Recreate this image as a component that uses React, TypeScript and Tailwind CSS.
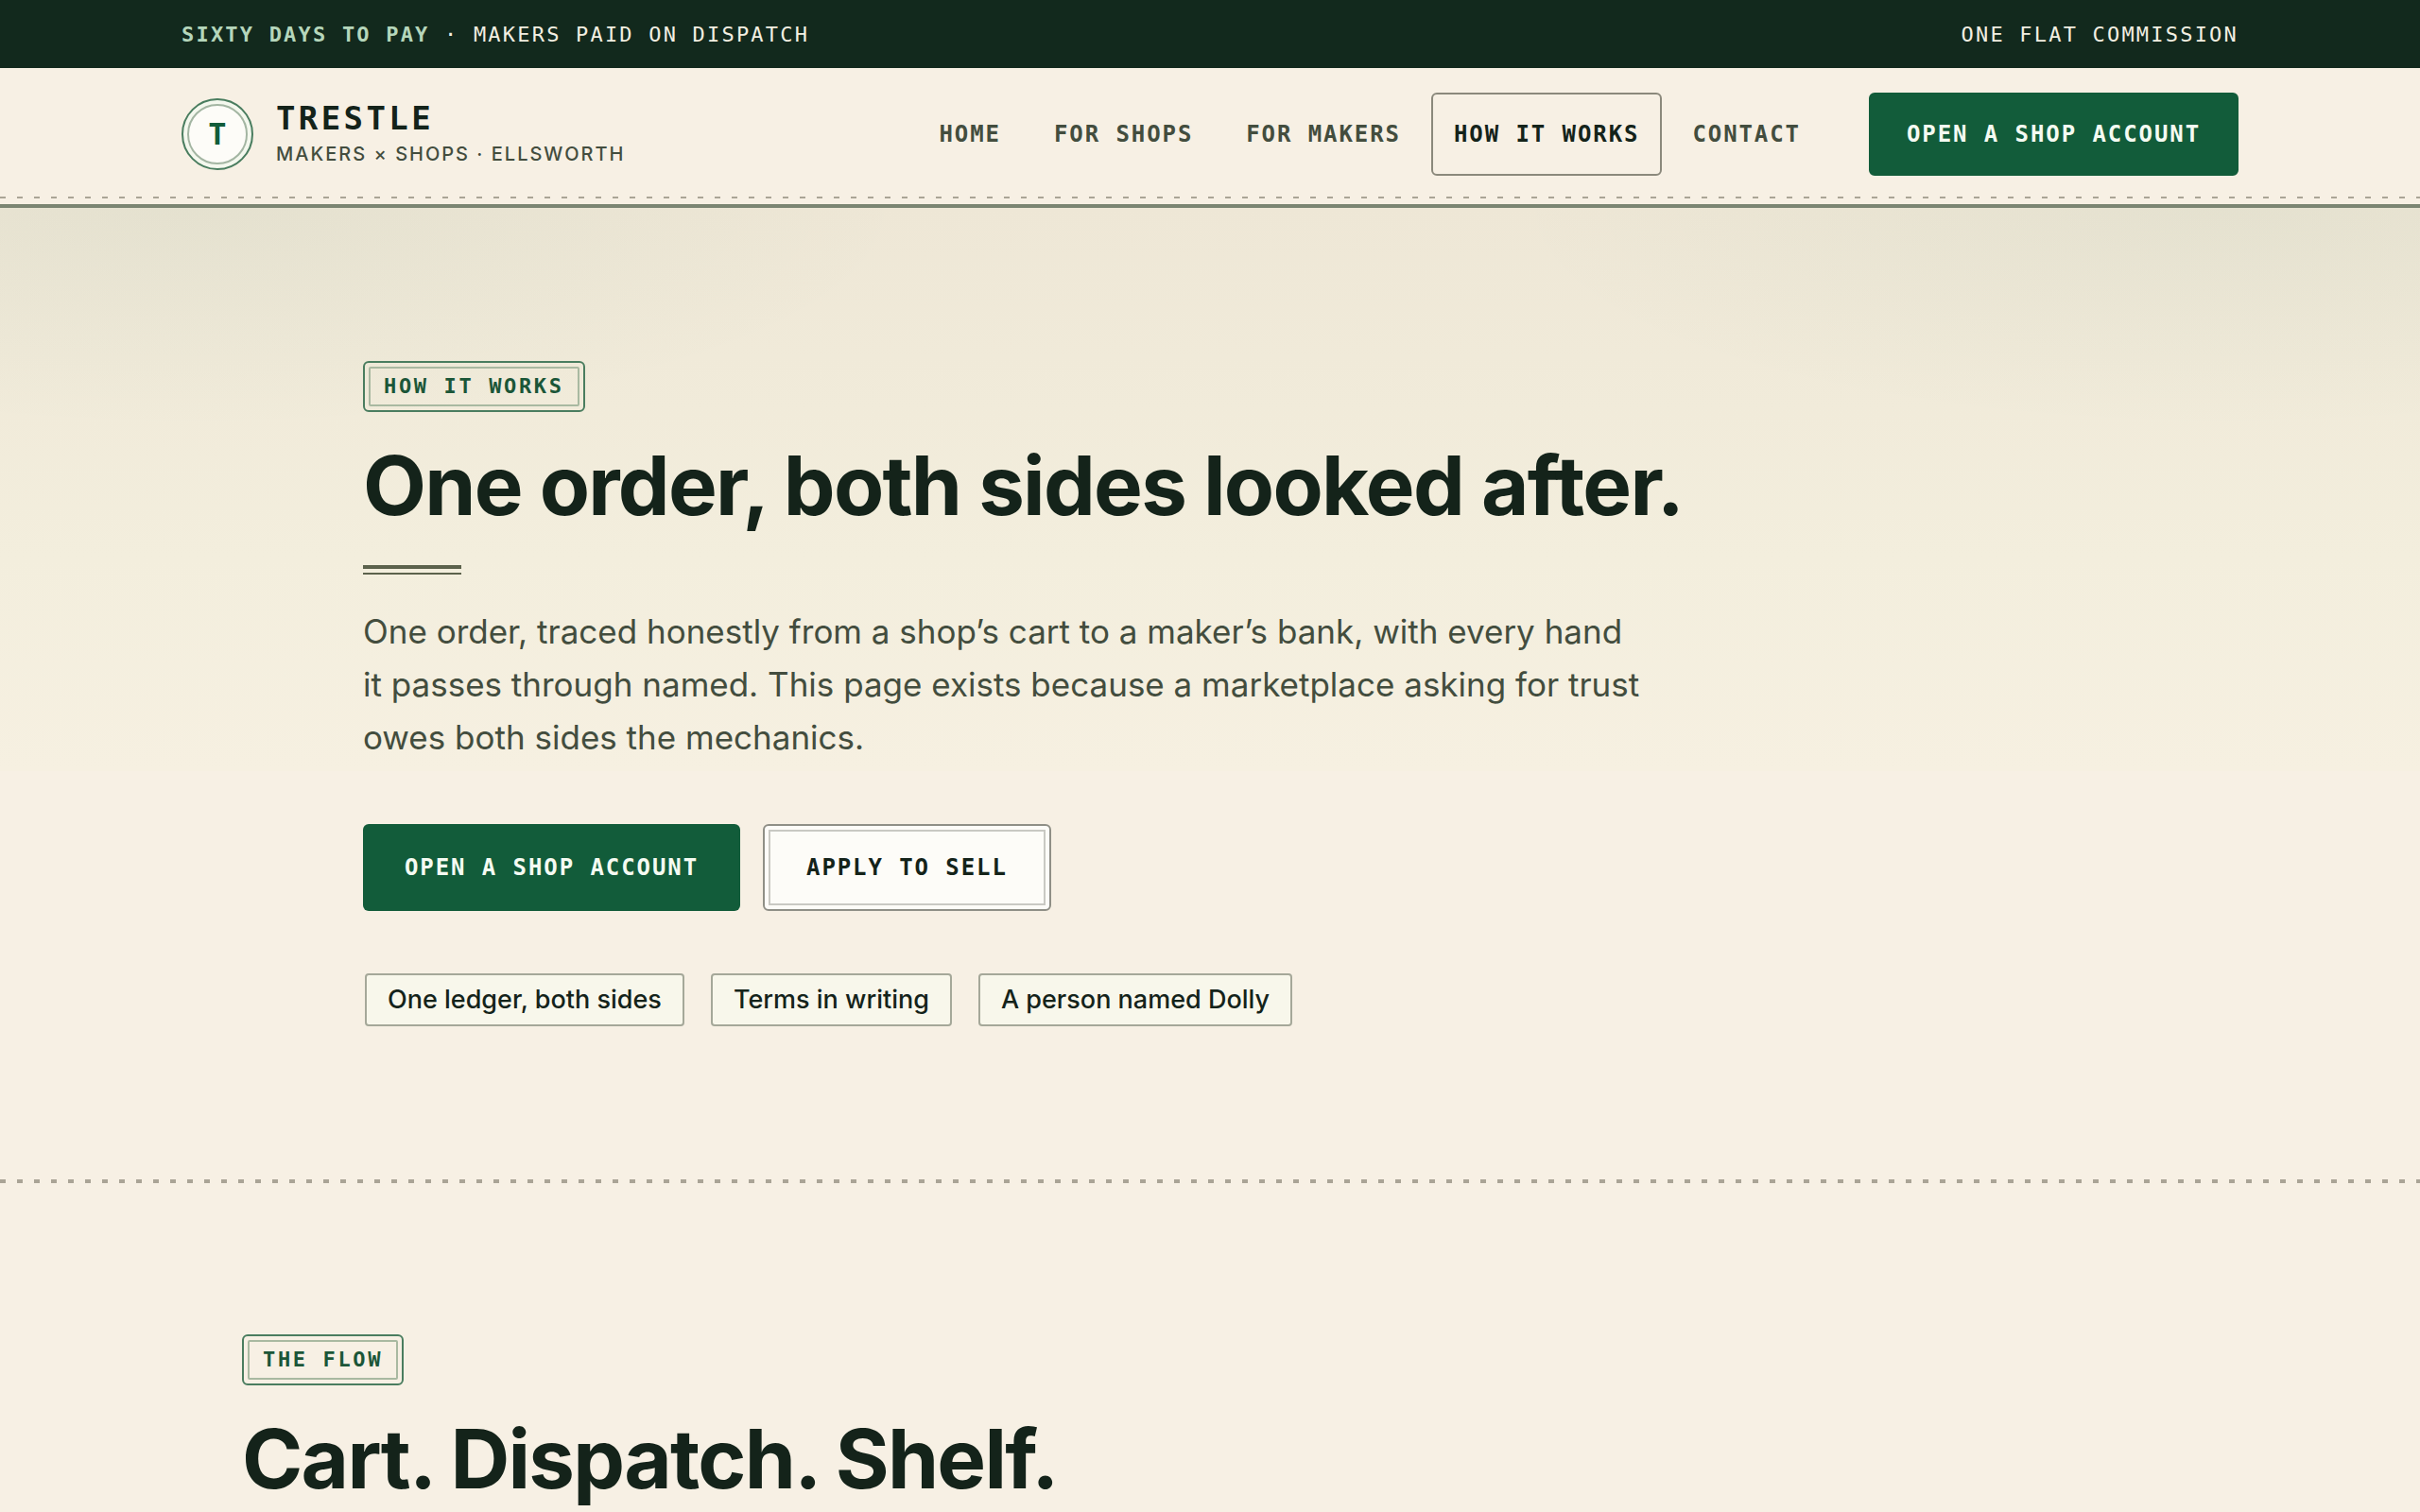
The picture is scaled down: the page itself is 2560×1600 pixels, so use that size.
import type { ReactNode } from 'react'

const navLinks = [
  { label: 'Home', href: '#home' },
  { label: 'For shops', href: '#shops' },
  { label: 'For makers', href: '#makers' },
  { label: 'How it works', href: '#how', current: true },
  { label: 'Contact', href: '#contact' },
]

const promises = ['One ledger, both sides', 'Terms in writing', 'A person named Dolly']

const Eyebrow = ({ children }: { children: ReactNode }) => (
  <p className="inline-flex rounded-md border-2 border-[#4a7d5f] p-1 font-['DejaVu_Sans_Mono',monospace] text-[22px] leading-[38px] font-bold tracking-[0.12em] text-[#1b5638] uppercase">
    <span className="rounded-xs border-2 border-[#a9b9a1] px-[14px]">{children}</span>
  </p>
)

const StitchLine = ({ className }: { className: string }) => (
  <div
    aria-hidden="true"
    className={`bg-[repeating-linear-gradient(90deg,#aaa496_0_6px,transparent_6px_18px)] ${className}`}
  />
)

const TopBar = () => (
  <div className="flex justify-between bg-[#12291d] px-48 pt-[21px] pb-[19px] font-['DejaVu_Sans_Mono',monospace] text-[22px] leading-8 tracking-widest text-[#f3efe2] uppercase">
    <p>
      <strong className="font-bold text-[#b5d6bb]">Sixty days to pay</strong> · Makers paid on dispatch
    </p>
    <p>One flat commission</p>
  </div>
)

const Header = () => (
  <header className="border-b-4 border-[#7b8572]">
    <div className="flex items-center justify-between px-48 pt-[26px] pb-[22px]">
      {/* Logo */}
      <a href="#home" className="flex items-center gap-6">
        <span className="flex size-[76px] rounded-full border-2 border-[#4a7d5f] bg-[#f4f8ee] p-1">
          <span className="flex flex-1 items-center justify-center rounded-full border-2 border-[#a3b5a2] bg-[#fdfcf8] font-['DejaVu_Sans_Mono',monospace] text-[32px] leading-none font-bold text-[#125c3a]">
            T
          </span>
        </span>
        <span className="flex flex-col pt-[2px]">
          <span className="font-['DejaVu_Sans_Mono',monospace] text-[34px] leading-10 font-bold tracking-widest text-[#14231a] uppercase">
            Trestle
          </span>
          <span className="font-['Inter',sans-serif] text-[20px] leading-9 font-medium tracking-widest text-[#434d3e] uppercase">
            Makers × Shops · Ellsworth
          </span>
        </span>
      </a>

      {/* Navigation */}
      <div className="flex items-center gap-12 font-['DejaVu_Sans_Mono',monospace] text-[24px] leading-[84px] font-bold tracking-[0.08em] uppercase">
        <nav className="flex gap-2">
          {navLinks.map((link) => (
            <a
              key={link.label}
              href={link.href}
              aria-current={link.current ? 'page' : undefined}
              className={
                link.current
                  ? 'rounded-md border-2 border-[#8b897c] px-[22px] text-[#14231a]'
                  : 'rounded-md border-2 border-transparent px-[22px] text-[#434d3e]'
              }
            >
              {link.label}
            </a>
          ))}
        </nav>
        <a href="#account" className="rounded-md border-2 border-[#125c3a] bg-[#125c3a] px-[38px] text-[#f5fbf2]">
          Open a shop account
        </a>
      </div>
    </div>
    <StitchLine className="mb-[6px] h-[2px]" />
  </header>
)

const Hero = () => (
  <section className="bg-[radial-gradient(ellipse_30%_23%_at_8%_0%,rgba(18,92,58,0.045),transparent),radial-gradient(ellipse_30%_23%_at_92%_0%,rgba(18,92,58,0.045),transparent),linear-gradient(#eee7d6,#f3eedd_36%,#f6f0e1_58%,#f7f0e4_58%)] px-48 pt-[162px] pb-40">
    <div className="mx-auto max-w-[1792px]">
      <Eyebrow>How it works</Eyebrow>
      <h1 className="mt-[30px] text-[87px] leading-[96px] font-bold tracking-[-0.02em] text-[#14231a]">
        One order, both sides looked after.
      </h1>
      <div aria-hidden="true" className="mt-9 h-[10px] w-[104px] border-t-4 border-b-2 border-[#5c624c]" />
      <p className="mt-8 max-w-[1360px] text-[35px] leading-[56px] text-[#434d3e]">
        One order, traced honestly from a shop’s cart to a maker’s bank, with every hand it passes through named. This
        page exists because a marketplace asking for trust owes both sides the mechanics.
      </p>
      <div className="mt-16 flex gap-6 font-['DejaVu_Sans_Mono',monospace] text-[24px] font-bold tracking-[0.08em] uppercase">
        <button type="button" className="rounded-md bg-[#125c3a] px-11 leading-[92px] text-[#f5fbf2] uppercase">
          Open a shop account
        </button>
        <button type="button" className="rounded-md border-2 border-[#8f8f86] bg-[#fdfcf8] p-1 text-[#14231a] uppercase">
          <span className="block border-2 border-[#c9c9c3] px-[38px] leading-[76px]">Apply to sell</span>
        </button>
      </div>
      <ul className="mt-16 flex gap-7 p-[2px] text-[27px] leading-[52px] font-medium text-[#14231a]">
        {promises.map((promise) => (
          <li key={promise} className="rounded border-2 border-[#a5a899] bg-[#f8f7eb] px-[22px]">
            {promise}
          </li>
        ))}
      </ul>
    </div>
  </section>
)

const Flow = () => (
  <section className="px-48 pt-40">
    <div className="mx-auto max-w-[2048px]">
      <Eyebrow>The flow</Eyebrow>
      <h2 className="mt-[30px] text-[87px] leading-[96px] font-bold tracking-[-0.02em] text-[#14231a]">
        Cart. Dispatch. Shelf.
      </h2>
    </div>
  </section>
)

const App = () => (
  <div className="h-screen overflow-hidden bg-[#f7f0e4] font-['Inter',sans-serif]">
    <TopBar />
    <Header />
    <main>
      <Hero />
      <StitchLine className="h-1" />
      <Flow />
    </main>
  </div>
)

export default App
